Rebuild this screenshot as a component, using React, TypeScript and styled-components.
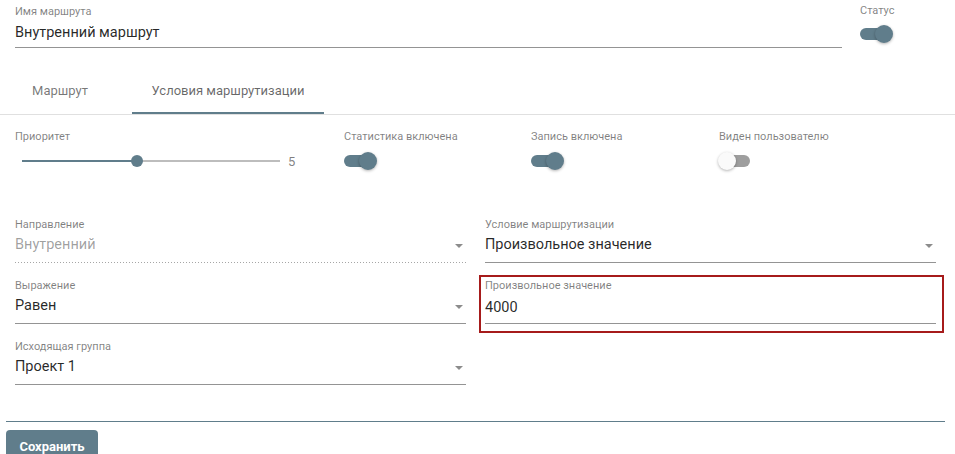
import styled, { createGlobalStyle } from "styled-components";

const PRIMARY = "#607d8b";

const GlobalStyle = createGlobalStyle`
  body {
    margin: 0;
    background: #fff;
    font-family: Roboto, "Liberation Sans", sans-serif;
  }
`;

const RouteForm = () => {
  return (
    <Page>
      <GlobalStyle />
      <Header>
        <NameField>
          <Label>Имя маршрута</Label>
          <ValueRow $top={5}>
            <Value>Внутренний маршрут</Value>
          </ValueRow>
        </NameField>
        <StatusBox>
          <Label>Статус</Label>
          <Switch $on />
        </StatusBox>
      </Header>

      <TabsBar>
        <Tab $width={120}>Маршрут</Tab>
        <Tab $width={192} $active>
          Условия маршрутизации
        </Tab>
      </TabsBar>

      <OptionsRow>
        <Option>
          <Label>Приоритет</Label>
          <SliderBox>
            <SliderTrack>
              <SliderFill style={{ width: `${((5 - 1) / 9) * 100}%` }} />
              <SliderThumb style={{ left: `${((5 - 1) / 9) * 100}%` }} />
            </SliderTrack>
            <SliderValue>5</SliderValue>
          </SliderBox>
        </Option>
        <Option>
          <Label>Статистика включена</Label>
          <Switch $on />
        </Option>
        <Option>
          <Label>Запись включена</Label>
          <Switch $on />
        </Option>
        <Option>
          <Label>Виден пользователю</Label>
          <Switch />
        </Option>
      </OptionsRow>

      <FieldsGrid>
        <Field $disabled>
          <Label>Направление</Label>
          <ValueRow>
            <Value $disabled>Внутренний</Value>
            <Arrow />
          </ValueRow>
        </Field>
        <Field>
          <Label>Условие маршрутизации</Label>
          <ValueRow>
            <Value>Произвольное значение</Value>
            <Arrow />
          </ValueRow>
        </Field>
        <Field>
          <Label>Выражение</Label>
          <ValueRow>
            <Value>Равен</Value>
            <Arrow />
          </ValueRow>
        </Field>
        <Highlight>
          <Field $bottom={5}>
            <Label>Произвольное значение</Label>
            <ValueRow $top={6}>
              <Value>4000</Value>
            </ValueRow>
          </Field>
        </Highlight>
        <Field>
          <Label>Исходящая группа</Label>
          <ValueRow>
            <Value>Проект 1</Value>
            <Arrow />
          </ValueRow>
        </Field>
      </FieldsGrid>

      <Footer>
        <Divider />
        <SaveButton>Сохранить</SaveButton>
      </Footer>
    </Page>
  );
};

const Switch = ({ $on }: { $on?: boolean }) => (
  <SwitchBox>
    <SwitchTrack $on={$on} />
    <SwitchThumb $on={$on} />
  </SwitchBox>
);

const Page = styled.div`
  width: 955px;
  height: 454px;
  overflow: hidden;
`;

const Header = styled.div`
  display: flex;
  align-items: flex-start;
  gap: 18px;
  padding: 6px 0 0 15px;
`;

const NameField = styled.div`
  width: 827px;
  display: flex;
  flex-direction: column;
  padding-bottom: 4px;
  border-bottom: 1px solid rgba(0, 0, 0, 0.42);
`;

const StatusBox = styled.div`
  display: flex;
  flex-direction: column;
  gap: 7px;
  margin-top: -1px;
`;

const Label = styled.div`
  font-size: 11px;
  line-height: 12px;
  color: rgba(0, 0, 0, 0.5);
  white-space: nowrap;
`;

const ValueRow = styled.div<{ $top?: number }>`
  display: flex;
  align-items: center;
  justify-content: space-between;
  margin-top: ${(p) => p.$top ?? 4}px;
  height: 20px;
`;

const Value = styled.div<{ $disabled?: boolean }>`
  font-size: 14.5px;
  line-height: 20px;
  color: ${(p) => (p.$disabled ? "rgba(0, 0, 0, 0.38)" : "rgba(0, 0, 0, 0.85)")};
  white-space: nowrap;
`;

const Arrow = styled.span`
  width: 0;
  height: 0;
  margin: 2px 3px 0 0;
  border-left: 4.5px solid transparent;
  border-right: 4.5px solid transparent;
  border-top: 4px solid rgba(0, 0, 0, 0.45);
`;

const TabsBar = styled.div`
  display: flex;
  margin-top: 18px;
  height: 48px;
  border-bottom: 1px solid #e0e0e0;
`;

const Tab = styled.div<{ $width: number; $active?: boolean }>`
  width: ${(p) => p.$width}px;
  box-sizing: border-box;
  display: flex;
  align-items: center;
  justify-content: center;
  font-size: 13px;
  color: ${(p) => (p.$active ? "rgba(0, 0, 0, 0.6)" : "rgba(0, 0, 0, 0.54)")};
  border-bottom: 2px solid ${(p) => (p.$active ? PRIMARY : "transparent")};
  padding-top: 2px;
  & + & {
    margin-left: 12px;
  }
`;

const OptionsRow = styled.div`
  display: grid;
  grid-template-columns: 329px 187px 188px 1fr;
  padding: 16px 0 0 15px;
`;

const Option = styled.div`
  display: flex;
  flex-direction: column;
  align-items: flex-start;
  gap: 8px;
`;

const SwitchBox = styled.div`
  position: relative;
  width: 34px;
  height: 20px;
`;

const SwitchTrack = styled.span<{ $on?: boolean }>`
  position: absolute;
  left: 0;
  top: 4px;
  width: 31px;
  height: 12px;
  border-radius: 6px;
  background: ${(p) => (p.$on ? PRIMARY : "#9e9e9e")};
`;

const SwitchThumb = styled.span<{ $on?: boolean }>`
  position: absolute;
  top: 1px;
  left: ${(p) => (p.$on ? "15px" : "-1px")};
  width: 18px;
  height: 18px;
  border-radius: 50%;
  background: ${(p) => (p.$on ? PRIMARY : "#fafafa")};
  box-shadow: 0 1px 3px rgba(0, 0, 0, 0.3);
`;

const SliderBox = styled.div`
  display: flex;
  align-items: center;
  height: 20px;
  padding-left: 7px;
`;

const SliderTrack = styled.div`
  position: relative;
  width: 258px;
  height: 2px;
  background: #bdbdbd;
`;

const SliderFill = styled.div`
  height: 2px;
  background: ${PRIMARY};
`;

const SliderThumb = styled.span`
  position: absolute;
  top: -5px;
  width: 12px;
  height: 12px;
  margin-left: -6px;
  border-radius: 50%;
  background: ${PRIMARY};
`;

const SliderValue = styled.span`
  margin-left: 8px;
  font-size: 13px;
  color: rgba(0, 0, 0, 0.5);
`;

const FieldsGrid = styled.div`
  display: grid;
  grid-template-columns: 451px 451px;
  column-gap: 19px;
  row-gap: 17px;
  padding: 48px 0 0 15px;
`;

const Field = styled.div<{ $disabled?: boolean; $bottom?: number }>`
  display: flex;
  flex-direction: column;
  padding-bottom: ${(p) => p.$bottom ?? 7}px;
  border-bottom: 1px solid
    ${(p) => (p.$disabled ? "transparent" : "rgba(0, 0, 0, 0.42)")};
  background: ${(p) =>
    p.$disabled
      ? "linear-gradient(to right, rgba(0, 0, 0, 0.35) 1px, transparent 1px) left bottom / 3px 1px repeat-x"
      : "none"};
  background-origin: border-box;
`;

const Highlight = styled.div`
  margin: -5px -8px -9px -6px;
  padding: 3px 6px 7px 4px;
  border: 2px solid #a61b1b;
`;

const Footer = styled.div`
  display: flex;
  flex-direction: column;
  align-items: flex-start;
  padding: 36px 10px 0 6px;
`;

const Divider = styled.div`
  align-self: stretch;
  height: 1px;
  background: ${PRIMARY};
`;

const SaveButton = styled.button`
  margin-top: 8px;
  width: 92px;
  height: 32px;
  border: none;
  border-radius: 4px;
  background: ${PRIMARY};
  color: #fff;
  font-family: Roboto, "Liberation Sans", sans-serif;
  font-size: 13px;
  font-weight: 700;
  cursor: pointer;
`;

export default function App() {
  return <RouteForm />;
}
